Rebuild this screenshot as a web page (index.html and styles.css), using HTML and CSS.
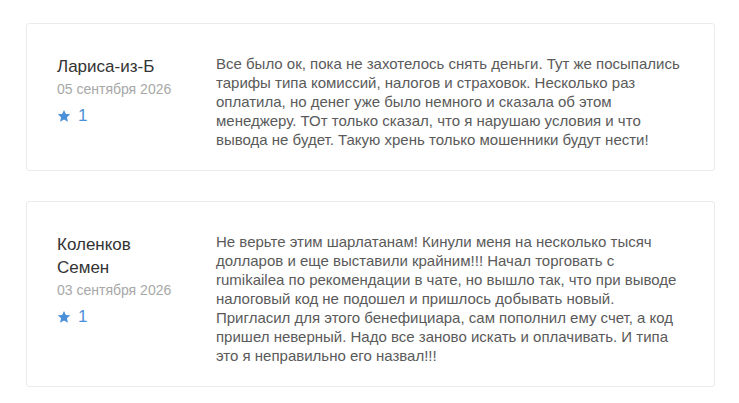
FILE: index.html
```html
<!DOCTYPE html>
<html lang="ru">
<head>
  <meta charset="UTF-8">
  <meta name="viewport" content="width=device-width, initial-scale=1.0">
  <title>Отзывы</title>
  <link rel="stylesheet" href="styles.css">
</head>
<body>
  <div class="reviews">
    <div class="review">
      <div class="review-author">
        <div class="author-name">Лариса-из-Б</div>
        <div class="review-date">05 сентября 2026</div>
        <div class="review-rating">
          <svg class="star" viewBox="0 0 24 24"><path d="M12 1.5l3.2 6.9 7.5.8-5.6 5.1 1.6 7.4L12 17.9l-6.7 3.8 1.6-7.4-5.6-5.1 7.5-.8z"/></svg>
          <span>1</span>
        </div>
      </div>
      <div class="review-text">Все было ок, пока не захотелось снять деньги. Тут же посыпались тарифы типа комиссий, налогов и страховок. Несколько раз оплатила, но денег уже было немного и сказала об этом менеджеру. ТОт только сказал, что я нарушаю условия и что вывода не будет. Такую хрень только мошенники будут нести!</div>
    </div>

    <div class="review">
      <div class="review-author">
        <div class="author-name">Коленков Семен</div>
        <div class="review-date">03 сентября 2026</div>
        <div class="review-rating">
          <svg class="star" viewBox="0 0 24 24"><path d="M12 1.5l3.2 6.9 7.5.8-5.6 5.1 1.6 7.4L12 17.9l-6.7 3.8 1.6-7.4-5.6-5.1 7.5-.8z"/></svg>
          <span>1</span>
        </div>
      </div>
      <div class="review-text">Не верьте этим шарлатанам! Кинули меня на несколько тысяч долларов и еще выставили крайним!!! Начал торговать с rumikailea по рекомендации в чате, но вышло так, что при выводе налоговый код не подошел и пришлось добывать новый. Пригласил для этого бенефициара, сам пополнил ему счет, а код пришел неверный. Надо все заново искать и оплачивать. И типа это я неправильно его назвал!!!</div>
    </div>
  </div>
</body>
</html>
```

FILE: styles.css
```css
body {
  font-family: "Liberation Sans", Arial, sans-serif;
  margin: 0;
  padding: 0;
  background: #fff;
}
.reviews {
  padding: 23px 24px 0 26px;
}
.review {
  display: flex;
  border: 1px solid #ebebeb;
  border-radius: 3px;
  padding: 30px 30px 21px 30px;
  margin-bottom: 30px;
}
.review-author {
  width: 130px;
  flex-shrink: 0;
  margin-right: 29px;
}
.author-name {
  font-size: 17px;
  line-height: 23px;
  color: #333;
  margin-top: 1px;
}
.review-date {
  font-size: 14px;
  line-height: 20px;
  color: #a8a8a8;
  margin-top: 1px;
}
.review-rating {
  display: flex;
  align-items: center;
  margin-top: 7px;
  color: #4a90d9;
  font-size: 17px;
  line-height: 20px;
}
.star {
  width: 14px;
  height: 14px;
  fill: #4a90d9;
  margin-right: 7px;
}
.review-text {
  flex: 1;
  font-size: 15px;
  line-height: 19px;
  color: #5a5a5a;
}
```
